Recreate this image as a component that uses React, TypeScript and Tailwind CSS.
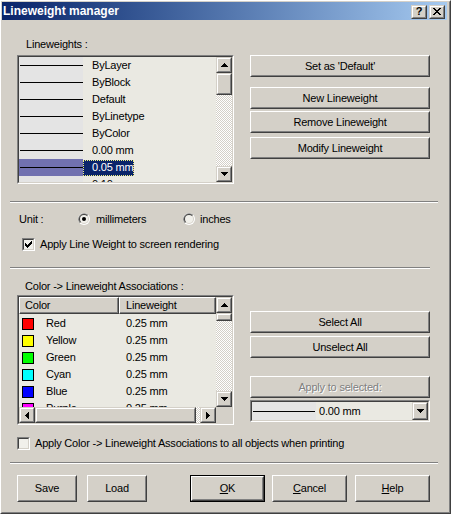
import React from "react";

type Dir = "up" | "down" | "left" | "right";

function Arrow({ dir }: { dir: Dir }) {
  const rows = [1, 3, 5, 7];
  if (dir === "up" || dir === "down") {
    return (
      <svg width="7" height="4" viewBox="0 0 7 4" shapeRendering="crispEdges">
        {rows.map((w, i) => (
          <rect key={i} x={(7 - w) / 2} y={dir === "up" ? i : 3 - i} width={w} height={1} fill="#000" />
        ))}
      </svg>
    );
  }
  return (
    <svg width="4" height="7" viewBox="0 0 4 7" shapeRendering="crispEdges">
      {rows.map((h, i) => (
        <rect key={i} y={(7 - h) / 2} x={dir === "left" ? i : 3 - i} height={h} width={1} fill="#000" />
      ))}
    </svg>
  );
}

// Win2000 scrollbar / caption button frame
function SmallRaised({ className = "", children }: { className?: string; children?: React.ReactNode }) {
  return (
    <div className={`shrink-0 border border-t-[#d4d0c8] border-l-[#d4d0c8] border-r-[#404040] border-b-[#404040] ${className}`}>
      <div className="w-full h-full border border-t-white border-l-white border-r-[#808080] border-b-[#808080] bg-[#d4d0c8] flex items-center justify-center">
        {children}
      </div>
    </div>
  );
}

function ScrollBtn({ dir }: { dir: Dir }) {
  return (
    <SmallRaised className="w-[16px] h-[16px]">
      <Arrow dir={dir} />
    </SmallRaised>
  );
}

const track =
  "bg-[image:repeating-conic-gradient(#d4d0c8_0_25%,#ffffff_0_50%)] bg-[length:2px_2px]";

function Btn({
  children,
  className = "",
  disabled = false,
  isDefault = false,
}: {
  children: React.ReactNode;
  className?: string;
  disabled?: boolean;
  isDefault?: boolean;
}) {
  const body = (
    <div className="w-full h-full border border-t-white border-l-white border-r-[#404040] border-b-[#404040]">
      <div
        className={`w-full h-full border border-t-[#d4d0c8] border-l-[#d4d0c8] border-r-[#808080] border-b-[#808080] bg-[#d4d0c8] flex items-center justify-center ${
          disabled ? "text-[#808080] [text-shadow:1px_1px_0_#ffffff]" : ""
        }`}
      >
        {children}
      </div>
    </div>
  );
  if (isDefault) {
    return <div className={`shrink-0 border border-black ${className}`}>{body}</div>;
  }
  return <div className={`shrink-0 ${className}`}>{body}</div>;
}

function Sunken({ className = "", innerClassName = "", children }: { className?: string; innerClassName?: string; children?: React.ReactNode }) {
  return (
    <div className={`shrink-0 border border-t-[#808080] border-l-[#808080] border-r-white border-b-white ${className}`}>
      <div className={`w-full h-full border border-t-[#404040] border-l-[#404040] border-r-[#d4d0c8] border-b-[#d4d0c8] ${innerClassName}`}>
        {children}
      </div>
    </div>
  );
}

function Check({ checked }: { checked?: boolean }) {
  const cols = [2, 3, 4, 3, 2, 1, 0];
  return (
    <Sunken className="w-[13px] h-[13px]" innerClassName="bg-[#f1f0eb] flex items-center justify-center">
      {checked && (
        <svg width="7" height="7" viewBox="0 0 7 7" shapeRendering="crispEdges">
          {cols.map((y, x) => (
            <rect key={x} x={x} y={y} width={1} height={3} fill="#000" />
          ))}
        </svg>
      )}
    </Sunken>
  );
}

function Radio({ checked }: { checked?: boolean }) {
  return (
    <svg width="12" height="12" viewBox="0 0 12 12" className="shrink-0">
      <circle cx="6" cy="6" r="6" fill="#ffffff" />
      <path d="M1.76 10.24A6 6 0 0 1 10.24 1.76L6 6Z" fill="#808080" />
      <circle cx="6" cy="6" r="5" fill="#d4d0c8" />
      <path d="M2.46 9.54A5 5 0 0 1 9.54 2.46L6 6Z" fill="#404040" />
      <circle cx="6" cy="6" r="4" fill="#f1f0eb" />
      {checked && <circle cx="6" cy="6" r="2" fill="#000" />}
    </svg>
  );
}

function Separator({ className = "" }: { className?: string }) {
  return <div className={`h-[2px] border-t border-t-[#808080] border-b border-b-white ${className}`} />;
}

const weights = ["ByLayer", "ByBlock", "Default", "ByLinetype", "ByColor", "0.00 mm", "0.05 mm", "0.10 mm"];

const colors = [
  { name: "Red", c: "bg-[#ff0000]" },
  { name: "Yellow", c: "bg-[#ffff00]" },
  { name: "Green", c: "bg-[#00ff00]" },
  { name: "Cyan", c: "bg-[#00ffff]" },
  { name: "Blue", c: "bg-[#0000ff]" },
  { name: "Purple", c: "bg-[#ff00ff]" },
];

const xGlyph = ["11000011", "01100110", "00111100", "00011000", "00111100", "01100110", "11000011"];

export default function App() {
  return (
    <div className="w-[451px] h-[514px] border border-t-white border-l-white border-r-[#404040] border-b-[#404040] font-['Liberation_Sans',Arial,sans-serif] text-[11px] leading-[13px] tracking-[-0.2px] text-black select-none">
      <div className="w-full h-full border border-t-[#d4d0c8] border-l-[#d4d0c8] border-r-[#808080] border-b-[#808080] bg-[#d4d0c8] pr-[2px] flex flex-col">
        {/* caption */}
        <div className="h-[18px] shrink-0 flex items-center bg-linear-to-r from-[#0a246a] to-[#a6caf0]">
          <span className="pl-[1px] text-[12px] font-bold tracking-normal text-white">Lineweight manager</span>
          <div className="ml-auto flex gap-[2px] pr-[2px] pt-[1px]">
            <SmallRaised className="w-[16px] h-[14px]">
              <span className="text-[11px] leading-[11px] font-bold">?</span>
            </SmallRaised>
            <SmallRaised className="w-[16px] h-[14px]">
              <svg width="8" height="7" viewBox="0 0 8 7" shapeRendering="crispEdges">
                {xGlyph.map((row, y) =>
                  row.split("").map((p, x) => (p === "1" ? <rect key={`${x}-${y}`} x={x} y={y} width={1} height={1} fill="#000" /> : null))
                )}
              </svg>
            </SmallRaised>
          </div>
        </div>

        {/* lineweights */}
        <div className="mt-[18px] ml-[24px]">Lineweights :</div>
        <div className="mt-[4px] flex">
          <Sunken className="ml-[15px] w-[217px] h-[129px]" innerClassName="flex">
            <div className="flex-1 overflow-hidden bg-[#eae9e2]">
              {weights.map((w, i) => {
                const sel = i === 6;
                return (
                  <div key={w} className="h-[17px] flex">
                    <div className={`w-[64px] h-[17px] flex items-center pl-[1px] ${sel ? "bg-[#7171b0]" : "bg-[#e4e4e4]"}`}>
                      <div className="w-[63px] h-[1px] bg-black" />
                    </div>
                    <div className="h-[17px] flex items-center">
                      <span
                        className={`pl-[9px] pr-[1px] h-[16px] flex items-center ${
                          sel ? "bg-[#0a246a] text-white outline-1 outline-dotted outline-[#f0f080] -outline-offset-1" : ""
                        }`}
                      >
                        {w}
                      </span>
                    </div>
                  </div>
                );
              })}
            </div>
            <div className="w-[16px] flex flex-col">
              <ScrollBtn dir="up" />
              <SmallRaised className="w-[16px] h-[22px]" />
              <div className={`flex-1 ${track}`} />
              <ScrollBtn dir="down" />
            </div>
          </Sunken>

          <div className="ml-[16px] w-[180px] flex flex-col">
            <Btn className="h-[22px]">Set as 'Default'</Btn>
            <Btn className="h-[22px] mt-[10px]">New Lineweight</Btn>
            <Btn className="h-[22px] mt-[2px]">Remove Lineweight</Btn>
            <Btn className="h-[22px] mt-[4px]">Modify Lineweight</Btn>
          </div>
        </div>

        <Separator className="mt-[17px] ml-[8px] w-[428px]" />

        {/* unit */}
        <div className="mt-[10px] h-[12px] flex items-center">
          <span className="ml-[17px] w-[59px]">Unit :</span>
          <Radio checked />
          <span className="ml-[6px] w-[87px]">millimeters</span>
          <Radio />
          <span className="ml-[5px]">inches</span>
        </div>

        <div className="mt-[13px] h-[13px] flex items-center">
          <div className="ml-[20px]">
            <Check checked />
          </div>
          <span className="ml-[5px]">Apply Line Weight to screen rendering</span>
        </div>

        <Separator className="mt-[16px] ml-[8px] w-[420px]" />

        {/* associations */}
        <div className="mt-[11px] ml-[23px]">Color -&gt; Lineweight Associations :</div>
        <div className="mt-[2px] flex">
          <Sunken className="ml-[15px] w-[217px] h-[130px]" innerClassName="flex flex-col">
            <div className="h-[110px] flex">
              <div className="flex-1 overflow-hidden bg-[#eae9e2] flex flex-col">
                <div className="h-[17px] shrink-0 flex">
                  <div className="w-[100px] border border-t-white border-l-white border-r-[#404040] border-b-[#404040]">
                    <div className="w-full h-full border-r border-r-[#808080] border-b border-b-[#808080] bg-[#d4d0c8] pl-[5px] flex items-center">Color</div>
                  </div>
                  <div className="flex-1 border border-t-white border-l-white border-r-[#404040] border-b-[#404040]">
                    <div className="w-full h-full border-r border-r-[#808080] border-b border-b-[#808080] bg-[#d4d0c8] pl-[6px] flex items-center">Lineweight</div>
                  </div>
                </div>
                <div className="pt-[1px]">
                  {colors.map((c) => (
                    <div key={c.name} className="h-[17px] flex items-center">
                      <div className="w-[100px] flex items-center pl-[3px]">
                        <div className={`w-[12px] h-[12px] border border-black ${c.c}`} />
                        <span className="ml-[12px]">{c.name}</span>
                      </div>
                      <span className="pl-[7px]">0.25 mm</span>
                    </div>
                  ))}
                </div>
              </div>
              <div className="w-[16px] flex flex-col">
                <ScrollBtn dir="up" />
                <SmallRaised className="w-[16px] h-[8px]" />
                <div className={`flex-1 ${track}`} />
                <ScrollBtn dir="down" />
              </div>
            </div>
            <div className="h-[16px] flex">
              <div className="w-[197px] flex">
                <ScrollBtn dir="left" />
                <SmallRaised className="w-[161px] h-[16px]" />
                <div className={`flex-1 ${track}`} />
                <ScrollBtn dir="right" />
              </div>
              <div className="flex-1 bg-[#d4d0c8]" />
            </div>
          </Sunken>

          <div className="ml-[16px] w-[180px] flex flex-col">
            <Btn className="h-[22px] mt-[16px]">Select All</Btn>
            <Btn className="h-[22px] mt-[3px]">Unselect All</Btn>
            <Btn className="h-[22px] mt-[18px]" disabled>
              Apply to selected:
            </Btn>
            <Sunken className="mt-[2px] w-[180px] h-[22px]" innerClassName="flex bg-[#eae9e2]">
              <div className="w-[64px] flex items-center pl-[1px] bg-[#e4e4e4]">
                <div className="w-[62px] h-[1px] bg-black" />
              </div>
              <span className="pl-[3px] flex items-center">0.00 mm</span>
              <div className="ml-auto">
                <SmallRaised className="w-[16px] h-[18px]">
                  <Arrow dir="down" />
                </SmallRaised>
              </div>
            </Sunken>
          </div>
        </div>

        <div className="mt-[12px] h-[13px] flex items-center">
          <div className="ml-[15px]">
            <Check />
          </div>
          <span className="ml-[5px]">Apply Color -&gt; Lineweight Associations to all objects when printing</span>
        </div>

        <Separator className="mt-[12px] ml-[8px] w-[428px]" />

        <div className="mt-[11px] flex">
          <Btn className="ml-[15px] w-[60px] h-[27px]">Save</Btn>
          <Btn className="ml-[10px] w-[60px] h-[27px]">Load</Btn>
          <Btn className="ml-[43px] w-[75px] h-[27px]" isDefault>
            <span>
              <u>O</u>K
            </span>
          </Btn>
          <Btn className="ml-[7px] w-[75px] h-[27px]">
            <span>
              <u>C</u>ancel
            </span>
          </Btn>
          <Btn className="ml-[8px] w-[75px] h-[27px]">
            <span>
              <u>H</u>elp
            </span>
          </Btn>
        </div>
      </div>
    </div>
  );
}
